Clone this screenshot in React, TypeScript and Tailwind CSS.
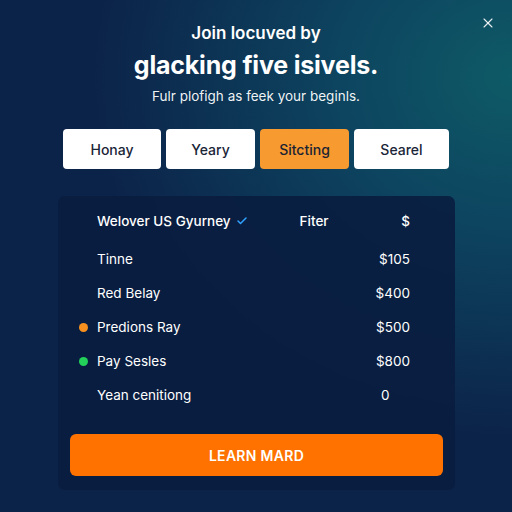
import { Check, X } from "lucide-react";

const TABS = [
  { label: "Honay", active: false, w: "w-[98px]" },
  { label: "Yeary", active: false, w: "w-[89px]" },
  { label: "Sitcting", active: true, w: "w-[89px]" },
  { label: "Searel", active: false, w: "w-[95px]" },
];

const ROWS = [
  { label: "Tinne", value: "$105", dot: "" },
  { label: "Red Belay", value: "$400", dot: "" },
  { label: "Predions Ray", value: "$500", dot: "bg-[#f7901e]" },
  { label: "Pay Sesles", value: "$800", dot: "bg-[#22d05a]" },
  { label: "Yean cenitiong", value: "0", dot: "" },
];

export default function App() {
  return (
    <div
      className="w-[512px] h-[512px] relative overflow-hidden text-white bg-[#0c2349] bg-[radial-gradient(ellipse_420px_360px_at_100%_15%,#0e5a66_0%,#0d4560_40%,rgba(12,35,73,0)_100%)]"
      style={{ fontFamily: "Inter, 'Open Sans', sans-serif" }}
    >
      <button className="absolute right-[16px] top-[15px] text-white/90">
        <X size={16} strokeWidth={1.6} />
      </button>

      <div className="flex flex-col items-center pt-[22px]">
        <h2 className="text-[17px] font-semibold leading-[22px]">Join locuved by</h2>
        <h1 className="text-[25px] font-bold leading-[32px] mt-[5px] tracking-[-0.2px]">glacking five isivels.</h1>
        <p className="text-[13.5px] leading-[18px] mt-[6px] text-white/95">Fulr plofigh as feek your beginls.</p>
      </div>

      <div className="flex justify-center gap-[5px] mt-[24px]">
        {TABS.map((t) => (
          <div key={t.label}
            className={`${t.w} h-[40px] rounded-[4px] flex items-center justify-center text-[14px] font-medium ${t.active ? "bg-[#f79a30] text-[#1b2433]" : "bg-white text-[#1a2538]"}`}>
            {t.label}
          </div>
        ))}
      </div>

      <div className="mx-[58px] mt-[27px] w-[397px] h-[294px] rounded-[7px] bg-[#091d3f]/90 pt-[12px] px-[12px] flex flex-col">
        <div className="flex items-center h-[26px] pl-[27px] pr-[33px] text-[13.5px] font-medium">
          <span>Welover US Gyurney</span>
          <Check size={12} strokeWidth={3} className="ml-[5px] text-[#2fa3ff]" />
          <span className="ml-[52px]">Fiter</span>
          <span className="ml-auto">$</span>
        </div>
        <div className="flex flex-col mt-[8px]">
          {ROWS.map((r) => (
            <div key={r.label} className="flex items-center h-[34px] pr-[33px] text-[13.5px]">
              <span className="w-[27px] flex justify-center">
                {r.dot && <span className={`w-[9px] h-[9px] rounded-full ${r.dot}`} />}
              </span>
              <span>{r.label}</span>
              <span className={`ml-auto ${r.value === "0" ? "w-[29px] text-left" : ""}`}>{r.value}</span>
            </div>
          ))}
        </div>
        <button className="mt-[22px] h-[42px] rounded-[6px] bg-[#ff7200] text-[14px] font-semibold tracking-[0.3px] text-white">
          LEARN MARD
        </button>
      </div>
    </div>
  );
}
